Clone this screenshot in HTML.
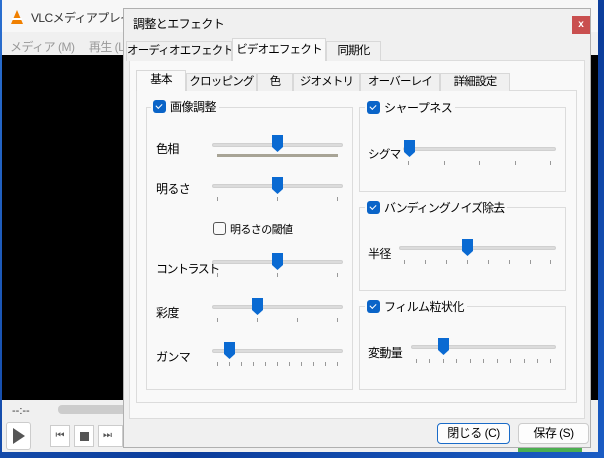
<!DOCTYPE html>
<html><head><meta charset="utf-8"><style>
*{box-sizing:border-box;margin:0;padding:0}
body{width:604px;height:458px;overflow:hidden;position:relative;background:linear-gradient(135deg,#2a6fd0,#0b3c9a 60%,#1a5cc4);font-family:"Liberation Sans","Noto Sans CJK JP",sans-serif;font-size:12px;color:#000;white-space:nowrap}
.a{position:absolute}
.track{position:absolute;height:4px;background:#dcdcdc;border:1px solid #d0d0d0;border-radius:2px}
.cb{position:absolute;width:13px;height:13px;background:#0a64c8;border-radius:3px}
.cb:after{content:"";position:absolute;left:3px;top:2px;width:5px;height:3px;border-left:1.5px solid #fff;border-bottom:1.5px solid #fff;transform:rotate(-45deg) translate(-1px,1px)}
.grp{position:absolute;border:1px solid #dcdcdc}
.lg{position:absolute;background:#f9f9f9;padding:0 3px 0 2px;display:flex;align-items:center;gap:4px;font-size:12px;letter-spacing:-0.5px}
.tab{position:absolute;height:20px;border:1px solid #d8d8d8;border-bottom:none;text-align:center;line-height:19px;background:#f0f0f0;font-size:11.5px;letter-spacing:-0.8px;overflow:hidden}
.lb{letter-spacing:-0.6px}
</style></head><body>
<div class="a" style="left:2px;top:0;width:596px;height:452px;background:#f0f0f0"></div>
<div class="a" style="left:2px;top:0;width:596px;height:32px;background:#f7f7f7"></div>
<svg class="a" style="left:9px;top:9px" width="16" height="16"><polygon points="8,1 14,15 2,15" fill="#f08000"/><rect x="3" y="9" width="10" height="2" fill="#fff"/></svg>
<div class="a" style="left:31px;top:9px;color:#333;font-size:12px;letter-spacing:-0.6px">VLCメディアプレイヤー</div>
<div class="a" style="left:10px;top:38px;color:#999;font-size:12px;letter-spacing:-0.5px">メディア (M)　 再生 (L)</div>
<div class="a" style="left:2px;top:55px;width:596px;height:345px;background:#000"></div>
<div class="a" style="left:12px;top:405px;font-size:11px;color:#333">--:--</div>
<div class="a" style="left:58px;top:405px;width:80px;height:9px;background:#ccc;border-radius:4px"></div>
<div class="a" style="left:6px;top:422px;width:25px;height:28px;border:1px solid #ccc;background:#fff;border-radius:3px"></div>
<svg class="a" style="left:12px;top:428px" width="14" height="16"><polygon points="1,0 13,8 1,16" fill="#555"/></svg>
<div class="a" style="left:50px;top:425px;width:20px;height:22px;border:1px solid #ccc;background:#fff;font-size:10px;color:#555;text-align:center;line-height:20px">⏮</div>
<div class="a" style="left:74px;top:425px;width:20px;height:22px;border:1px solid #ccc;background:#fff"><div class="a" style="left:5px;top:6px;width:9px;height:9px;background:#555"></div></div>
<div class="a" style="left:98px;top:425px;width:25px;height:22px;border:1px solid #ccc;background:#fff;font-size:10px;color:#555;line-height:20px;padding-left:4px">⏭</div>
<div class="a" style="left:518px;top:448px;width:64px;height:4px;background:#4caf50"></div>

<div class="a" style="left:123px;top:8px;width:468px;height:440px;background:#f0f0f0;border:1px solid #b0b0b0"></div>
<div class="a" style="left:133px;top:15px;font-size:12px;letter-spacing:-0.6px">調整とエフェクト</div>
<div class="a" style="left:572px;top:16px;width:18px;height:18px;background:#c94f4f;color:#fff;font-size:10px;text-align:center;line-height:17px;font-weight:bold">x</div>
<div class="a" style="left:129px;top:60px;width:456px;height:359px;background:#f9f9f9;border:1px solid #dcdcdc"></div>
<div class="tab" style="left:126px;top:41px;width:106px">オーディオエフェクト</div>
<div class="tab" style="left:232px;top:38px;width:94px;height:23px;background:#f9f9f9;line-height:22px">ビデオエフェクト</div>
<div class="tab" style="left:326px;top:41px;width:55px">同期化</div>
<div class="a" style="left:136px;top:90px;width:441px;height:313px;background:#f9f9f9;border:1px solid #dcdcdc"></div>
<div class="tab" style="left:136px;top:70px;width:50px;height:21px;background:#f9f9f9">基本</div>
<div class="tab" style="left:186px;top:73px;width:71px;height:18px;line-height:17px">クロッピング</div>
<div class="tab" style="left:257px;top:73px;width:36px;height:18px;line-height:17px">色</div>
<div class="tab" style="left:293px;top:73px;width:67px;height:18px;line-height:17px">ジオメトリ</div>
<div class="tab" style="left:360px;top:73px;width:80px;height:18px;line-height:17px">オーバーレイ</div>
<div class="tab" style="left:440px;top:73px;width:70px;height:18px;line-height:17px">詳細設定</div>

<div class="grp" style="left:146px;top:107px;width:207px;height:283px"></div>
<div class="lg" style="left:151px;top:98px;height:16px"><span class="cb" style="position:relative"></span>画像調整</div>
<div class="a lb" style="left:156px;top:140px">色相</div>
<div class="track" style="left:212px;top:143px;width:131px"></div>
<div class="a" style="left:217px;top:154px;width:121px;height:3px;background:#a8a496"></div>
<div class="a lb" style="left:156px;top:180px">明るさ</div>
<div class="track" style="left:212px;top:184px;width:131px"></div>
<div class="a" style="left:213px;top:222px;width:13px;height:13px;border:1px solid #555;border-radius:3px;background:#f9f9f9"></div>
<div class="a" style="left:230px;top:221px;font-size:11px;letter-spacing:-0.6px">明るさの閾値</div>
<div class="a" style="left:156px;top:260px;letter-spacing:-1.5px">コントラスト</div>
<div class="track" style="left:212px;top:260px;width:131px"></div>
<div class="a lb" style="left:156px;top:304px">彩度</div>
<div class="track" style="left:212px;top:305px;width:131px"></div>
<div class="a lb" style="left:156px;top:348px">ガンマ</div>
<div class="track" style="left:212px;top:349px;width:131px"></div>

<div class="grp" style="left:359px;top:107px;width:207px;height:85px"></div>
<div class="lg" style="left:365px;top:99px;height:16px"><span class="cb" style="position:relative"></span>シャープネス</div>
<div class="a lb" style="left:368px;top:146px;font-size:11.5px">シグマ</div>
<div class="track" style="left:403px;top:147px;width:153px"></div>
<div class="grp" style="left:359px;top:207px;width:207px;height:84px"></div>
<div class="lg" style="left:365px;top:199px;height:16px;letter-spacing:-1px"><span class="cb" style="position:relative"></span>バンディングノイズ除去</div>
<div class="a lb" style="left:368px;top:245px">半径</div>
<div class="track" style="left:399px;top:246px;width:157px"></div>
<div class="grp" style="left:359px;top:306px;width:207px;height:84px"></div>
<div class="lg" style="left:365px;top:298px;height:16px"><span class="cb" style="position:relative"></span>フィルム粒状化</div>
<div class="a lb" style="left:368px;top:344px">変動量</div>
<div class="track" style="left:411px;top:345px;width:145px"></div>

<svg class="a" style="left:0;top:0" width="604" height="458">
<defs><path id="hd" d="M0,0h11v12l-5.5,5l-5.5,-5z" fill="#0a6ad2"/></defs>
<use href="#hd" x="272" y="135"/>
<use href="#hd" x="272" y="177"/>
<use href="#hd" x="272" y="253"/>
<use href="#hd" x="252" y="298"/>
<use href="#hd" x="224" y="342"/>
<use href="#hd" x="404" y="140"/>
<use href="#hd" x="462" y="239"/>
<use href="#hd" x="438" y="338"/>
<g stroke="#999" stroke-width="1">
<path d="M217.5,197v4M277.5,197v4M337.5,197v4"/>
<path d="M217.5,273v4M277.5,273v4M337.5,273v4"/>
<path d="M217.5,318v4M257.5,318v4M297.5,318v4M337.5,318v4"/>
<path d="M217.5,362v4M229.5,362v4M241.5,362v4M253.5,362v4M265.5,362v4M277.5,362v4M289.5,362v4M301.5,362v4M313.5,362v4M325.5,362v4M337.5,362v4"/>
<path d="M408.5,161v4M444.5,161v4M479.5,161v4M515.5,161v4M550.5,161v4"/>
<path d="M404.5,260v4M425.5,260v4M446.5,260v4M467.5,260v4M488.5,260v4M509.5,260v4M530.5,260v4M550.5,260v4"/>
<path d="M416.5,359v4M429.5,359v4M443.5,359v4M456.5,359v4M470.5,359v4M483.5,359v4M497.5,359v4M510.5,359v4M524.5,359v4M537.5,359v4M550.5,359v4"/>
</g></svg>

<div class="a" style="left:437px;top:423px;width:73px;height:21px;border:1px solid #1a6bc8;border-radius:4px;background:#fdfdfd;text-align:center;line-height:19px;letter-spacing:-0.5px">閉じる (C)</div>
<div class="a" style="left:518px;top:423px;width:71px;height:21px;border:1px solid #ccc;border-radius:4px;background:#fdfdfd;text-align:center;line-height:19px;letter-spacing:-0.5px">保存 (S)</div>
</body></html>
